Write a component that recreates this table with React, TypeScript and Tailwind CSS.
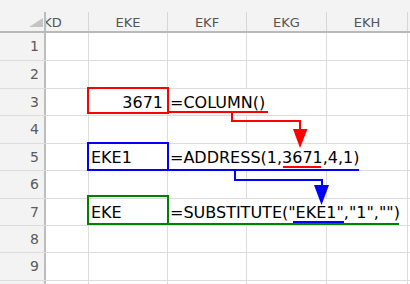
type Cell = { text?: string; span?: number; align?: "left" | "right" };

const colWidths = [43, 79, 79, 80, 81, 60];
const rowHeights = [28, 28, 27, 28, 27, 28, 27, 27, 28, 28];

const rows: Cell[][] = [
  [{}, {}, {}, {}, {}, {}],
  [{}, {}, {}, {}, {}, {}],
  [{}, { text: "3671", align: "right" }, { text: "=COLUMN()", span: 2 }, {}, {}],
  [{}, {}, {}, {}, {}, {}],
  [{}, { text: "EKE1" }, { text: "=ADDRESS(1,3671,4,1)", span: 3 }, {}],
  [{}, {}, {}, {}, {}, {}],
  [{}, { text: "EKE" }, { text: '=SUBSTITUTE("EKE1","1","")', span: 3 }, {}],
  [{}, {}, {}, {}, {}, {}],
  [{}, {}, {}, {}, {}, {}],
  [{}, {}, {}, {}, {}, {}],
];

function Annotations() {
  return (
    <svg className="pointer-events-none absolute left-0 top-0" width={410} height={284} viewBox="0 0 410 284" fill="none">
      {/* row 3 -> row 5 */}
      <rect x={88} y={88} width={80} height={25} stroke="#ff0000" strokeWidth={2} />
      <line x1={168} y1={112} x2={268} y2={112} stroke="#ff0000" strokeWidth={2} />
      <polyline points="232,112 232,121 300,121 300,130" stroke="#ff0000" strokeWidth={2} />
      <polygon points="293,129 307.5,129 300,148" fill="#ff0000" />
      <line x1={283} y1={167} x2={321} y2={167} stroke="#ff0000" strokeWidth={2} />

      {/* row 5 -> row 7 */}
      <rect x={88} y={143} width={80} height={27} stroke="#0000ff" strokeWidth={2} />
      <line x1={168} y1={170} x2={359} y2={170} stroke="#0000ff" strokeWidth={2} />
      <polyline points="235,170 235,180 322,180 322,186" stroke="#0000ff" strokeWidth={2} />
      <polygon points="314,185 329,185 321.5,205" fill="#0000ff" />
      <line x1={293} y1={222} x2={344} y2={222} stroke="#0000ff" strokeWidth={2} />

      {/* row 7 */}
      <rect x={88} y={196} width={80} height={28} stroke="#008000" strokeWidth={2} />
      <line x1={168} y1={224} x2={399} y2={224} stroke="#008000" strokeWidth={2} />
    </svg>
  );
}

export default function App() {
  const headers = ["EKE", "EKF", "EKG", "EKH", ""];
  return (
    <div className="relative h-[284px] w-[410px] overflow-hidden bg-white font-['DejaVu_Sans',sans-serif]">
      <div className="h-[12px] bg-[#f3f3f3]" />

      {/* column headers */}
      <div className="flex h-[21px] border-b-2 border-[#b9b9b9] bg-[#f3f3f3] text-[13px] text-[#555]">
        <div className="relative w-[46px] shrink-0 border-r-2 border-[#bdbdbd]">
          <div className="absolute bottom-[4px] right-[1px] h-0 w-0 border-b-[9px] border-l-[14px] border-b-[#c4c4c4] border-l-transparent" />
        </div>
        <div className="flex w-[43px] shrink-0 justify-end overflow-hidden border-r border-[#d6d6d6]">
          <div className="w-[79px] shrink-0 pt-[1px] text-center leading-[19px]">EKD</div>
        </div>
        {headers.map((h, i) => (
          <div
            key={i}
            style={{ width: colWidths[i + 1] }}
            className="shrink-0 border-r border-[#d6d6d6] pt-[1px] text-center leading-[19px]"
          >
            {h}
          </div>
        ))}
      </div>

      {/* body rows */}
      {rows.map((cells, r) => {
        let col = 0;
        return (
          <div key={r} style={{ height: rowHeights[r] }} className="flex border-b border-[#dcdcdc]">
            <div className="w-[46px] shrink-0 border-r-2 border-[#bdbdbd] bg-[#f3f3f3] pr-[5px] text-right text-[14px] leading-[27px] text-[#5a5a5a]">
              {r < 9 ? r + 1 : ""}
            </div>
            {cells.map((c, i) => {
              const span = c.span ?? 1;
              let w = 0;
              for (let k = 0; k < span; k++) w += colWidths[col + k] ?? 60;
              col += span;
              return (
                <div
                  key={i}
                  style={{ width: w }}
                  className={
                    c.align === "right"
                      ? "shrink-0 whitespace-nowrap border-r border-[#dcdcdc] pr-[4px] text-right text-[16px] leading-[27px] text-black"
                      : "shrink-0 whitespace-nowrap border-r border-[#dcdcdc] pl-[2px] text-[16px] leading-[27px] text-black"
                  }
                >
                  {c.text}
                </div>
              );
            })}
          </div>
        );
      })}

      <Annotations />
    </div>
  );
}
